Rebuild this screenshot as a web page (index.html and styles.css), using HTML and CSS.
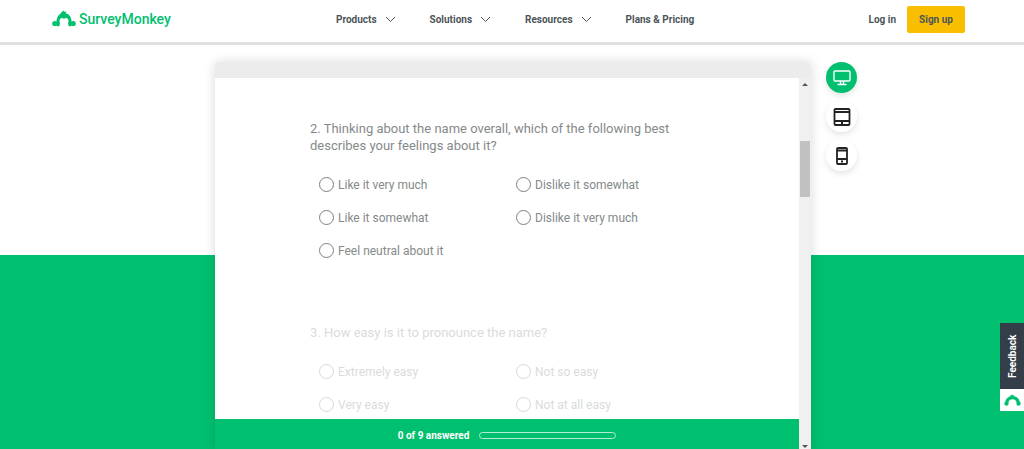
FILE: index.html
```html
<!DOCTYPE html>
<html lang="en">
<head>
  <meta charset="UTF-8">
  <meta name="viewport" content="width=device-width, initial-scale=1.0">
  <title>SurveyMonkey</title>
  <link rel="stylesheet" href="styles.css">
</head>
<body>
  <!-- header -->
  <header class="header">
    <a href="#" class="logo">
      <svg class="logo-mark" viewBox="0 0 24 18" aria-hidden="true">
        <path d="M4.500 11C5 6 7.500 3.300 12 3.300S19 6 19.500 11L17 12C16.500 9.500 15.500 8 14 8Q12.500 8 12 9.200Q11.500 8 10 8C8.500 8 7.500 9.500 7 12Z" fill="currentColor"/>
        <path d="M8.500 4Q9 1.500 12.500 .5L12 2L14.500 1.500L13.500 4Z" fill="currentColor"/>
        <circle cx="2.800" cy="13.500" r="2.600" fill="currentColor"/>
        <circle cx="21.200" cy="13.500" r="2.600" fill="currentColor"/>
        <ellipse cx="6" cy="13.300" rx="1.800" ry="3.200" fill="currentColor"/>
        <ellipse cx="18" cy="13.300" rx="1.800" ry="3.200" fill="currentColor"/>
      </svg>
      <span class="logo-text">SurveyMonkey</span>
    </a>
    <nav class="nav">
      <a href="#" class="nav-link">Products
        <svg class="chevron" viewBox="0 0 11 7"><path d="M1 1l4.500 4.500L10 1"/></svg>
      </a>
      <a href="#" class="nav-link">Solutions
        <svg class="chevron" viewBox="0 0 11 7"><path d="M1 1l4.500 4.500L10 1"/></svg>
      </a>
      <a href="#" class="nav-link">Resources
        <svg class="chevron" viewBox="0 0 11 7"><path d="M1 1l4.500 4.500L10 1"/></svg>
      </a>
      <a href="#" class="nav-link">Plans &amp; Pricing</a>
    </nav>
    <div class="account">
      <a href="#" class="login">Log in</a>
      <button type="button" class="signup">Sign up</button>
    </div>
  </header>

  <!-- survey preview -->
  <main class="hero">
    <section class="preview">
      <div class="preview-bar"></div>
      <div class="preview-body">
        <form class="survey">
          <div class="questions">
            <fieldset class="question">
              <legend>2. Thinking about the name overall, which of the following best describes your feelings about it?</legend>
              <div class="options">
                <label class="option"><input type="radio" name="feeling">Like it very much</label>
                <label class="option"><input type="radio" name="feeling">Dislike it somewhat</label>
                <label class="option"><input type="radio" name="feeling">Like it somewhat</label>
                <label class="option"><input type="radio" name="feeling">Dislike it very much</label>
                <label class="option"><input type="radio" name="feeling">Feel neutral about it</label>
              </div>
            </fieldset>
            <fieldset class="question faded">
              <legend>3. How easy is it to pronounce the name?</legend>
              <div class="options">
                <label class="option"><input type="radio" name="pronounce">Extremely easy</label>
                <label class="option"><input type="radio" name="pronounce">Not so easy</label>
                <label class="option"><input type="radio" name="pronounce">Very easy</label>
                <label class="option"><input type="radio" name="pronounce">Not at all easy</label>
              </div>
            </fieldset>
          </div>
          <div class="survey-footer">
            <label for="answered">0 of 9 answered</label>
            <progress id="answered" class="progress" value="0" max="9"></progress>
          </div>
        </form>
        <div class="scrollbar">
          <span class="arrow arrow-up"></span>
          <span class="thumb"></span>
          <span class="arrow arrow-down"></span>
        </div>
      </div>
    </section>

    <div class="devices">
      <button type="button" class="device active" aria-label="Desktop">
        <svg viewBox="0 0 18 18"><rect x="1" y="2" width="16" height="10" rx="1"/><path d="M7.500 12v3M10.500 12v3M4.500 15.500h9"/></svg>
      </button>
      <button type="button" class="device" aria-label="Tablet">
        <svg viewBox="0 0 18 18"><rect x="1.500" y="1" width="15" height="16" rx="1"/><path d="M1.500 4h15M1.500 13h15M8 15h2"/></svg>
      </button>
      <button type="button" class="device" aria-label="Phone">
        <svg viewBox="0 0 18 18"><rect x="4" y="1" width="10" height="16" rx="1"/><path d="M4 3.500h10M4 12h10M8 14.500h2"/></svg>
      </button>
    </div>
  </main>

  <!-- feedback tab -->
  <div class="feedback">
    <button type="button" class="feedback-button">Feedback</button>
    <span class="feedback-logo">
      <svg viewBox="0 0 24 18" aria-hidden="true">
        <path d="M3.500 13C4.500 7.500 7.500 5 12 5S19.500 7.500 20.500 13" fill="none" stroke="currentColor" stroke-width="4.500"/>
        <path d="M8 3.500Q8.500 1 12.500 .5L12 1.800L14.500 1.200L13.500 3.500Z" fill="currentColor"/>
        <circle cx="3.500" cy="13.500" r="3" fill="currentColor"/>
        <circle cx="20.500" cy="13.500" r="3" fill="currentColor"/>
      </svg>
    </span>
  </div>
</body>
</html>
```

FILE: styles.css
```css
:root {
  --green: #00bf6f;
  --text: #4d5558;
  --muted: #858a8a;
  --yellow: #f9be00;
}

* {
  box-sizing: border-box;
}

body {
  margin: 0;
  min-height: 100vh;
  display: flex;
  flex-direction: column;
  font-family: Roboto, sans-serif;
  color: var(--text);
  background: #fff;
}

a {
  color: inherit;
  text-decoration: none;
}

button {
  border: none;
  padding: 0;
  font-family: inherit;
  cursor: pointer;
}

/* Header */
.header {
  display: flex;
  align-items: center;
  height: 45px;
  padding: 0 59px 4px 52px;
  border-bottom: 3px solid #e0e0e0;
  font-size: 10px;
  font-weight: 700;
}

.logo {
  display: flex;
  align-items: center;
  gap: 3px;
  width: 122px;
  margin-right: 162px;
  color: var(--green);
}

.logo-mark {
  width: 24px;
  height: 18px;
}

.logo-text {
  font-size: 14px;
  font-weight: 500;
}

.nav {
  display: flex;
  gap: 34px;
}

.nav-link {
  display: flex;
  align-items: center;
  gap: 8px;
  white-space: nowrap;
}

.chevron {
  width: 11px;
  height: 7px;
  fill: none;
  stroke: currentColor;
}

.account {
  display: flex;
  align-items: center;
  gap: 11px;
  margin-left: auto;
}

.signup {
  width: 58px;
  height: 27px;
  border-radius: 2px;
  background: var(--yellow);
  color: var(--text);
  font-size: 10px;
  font-weight: 700;
}

/* Preview */
.hero {
  flex: 1;
  min-height: 404px;
  display: grid;
  grid-template-columns: 1fr minmax(0, 596px) 1fr;
  padding: 17px 0 0 2px;
  background: linear-gradient(#fff 210px, var(--green) 210px);
}

.preview {
  grid-column: 2;
  display: flex;
  flex-direction: column;
  box-shadow: 0 0 12px rgba(0, 0, 0, .15);
  border-radius: 4px 4px 0 0;
}

.preview-bar {
  height: 16px;
  border-radius: 4px 4px 0 0;
  background: #ececec;
}

.preview-body {
  flex: 1;
  display: flex;
}

.survey {
  flex: 1;
  display: flex;
  flex-direction: column;
  background: #fff;
}

.questions {
  flex: 1 1 0;
  min-height: 0;
  overflow: hidden;
  padding: 42px 86px 0 95px;
}

.question {
  max-width: 403px;
  margin: 0 0 57px;
  padding: 0;
  border: none;
  min-width: 0;
  color: var(--muted);
}

.question legend {
  padding: 0 24px 0 0;
  font-size: 13px;
  line-height: 17px;
}

.faded {
  opacity: .3;
}

.options {
  display: grid;
  grid-template-columns: 1fr 1fr;
  padding: 14px 0 0 9px;
}

.option {
  display: flex;
  align-items: center;
  gap: 4px;
  height: 33px;
  font-size: 12px;
  white-space: nowrap;
}

.option input {
  appearance: none;
  width: 15px;
  height: 15px;
  margin: 0;
  border: 1px solid #7c8181;
  border-radius: 50%;
  background: #fff;
}

.survey-footer {
  display: flex;
  align-items: center;
  justify-content: center;
  gap: 10px;
  height: 30px;
  padding-top: 3px;
  background: var(--green);
  color: #fff;
  font-size: 10px;
  font-weight: 700;
}

.progress {
  appearance: none;
  width: 137px;
  height: 7px;
  border: 1px solid #b5ecd3;
  border-radius: 4px;
  background: transparent;
}

.progress::-webkit-progress-bar {
  background: transparent;
}

.scrollbar {
  display: flex;
  flex-direction: column;
  align-items: center;
  width: 12px;
  padding: 5px 0 1px;
  background: #f0f0f0;
}

.arrow {
  border: 3px solid transparent;
}

.arrow-up {
  border-top: none;
  border-bottom-color: #555;
}

.arrow-down {
  margin-top: auto;
  border-bottom: none;
  border-top-color: #555;
}

.thumb {
  width: 10px;
  height: 56px;
  margin-top: 55px;
  background: #c1c1c1;
}

/* Device switcher */
.devices {
  display: flex;
  flex-direction: column;
  align-items: flex-start;
  gap: 8px;
  padding-left: 15px;
}

.device {
  display: flex;
  align-items: center;
  justify-content: center;
  width: 31px;
  height: 31px;
  border-radius: 50%;
  background: #fff;
  color: #222;
  box-shadow: 0 3px 6px rgba(0, 0, 0, .1);
}

.device svg {
  width: 18px;
  height: 18px;
  fill: none;
  stroke: currentColor;
  stroke-width: 1.8;
}

.device.active {
  background: var(--green);
  color: #fff;
}

.device.active svg {
  stroke-width: 1.4;
}

/* Feedback tab */
.feedback {
  position: fixed;
  right: 0;
  bottom: 38px;
  width: 24px;
}

.feedback-button {
  display: flex;
  align-items: center;
  justify-content: center;
  width: 24px;
  height: 66px;
  background: #333e48;
  color: #fff;
  font-size: 10px;
  font-weight: 700;
  writing-mode: vertical-rl;
  transform: rotate(180deg);
}

.feedback-logo {
  display: flex;
  align-items: center;
  justify-content: center;
  height: 22px;
  background: #fff;
  color: var(--green);
}

.feedback-logo svg {
  width: 17px;
  height: 13px;
}
```
